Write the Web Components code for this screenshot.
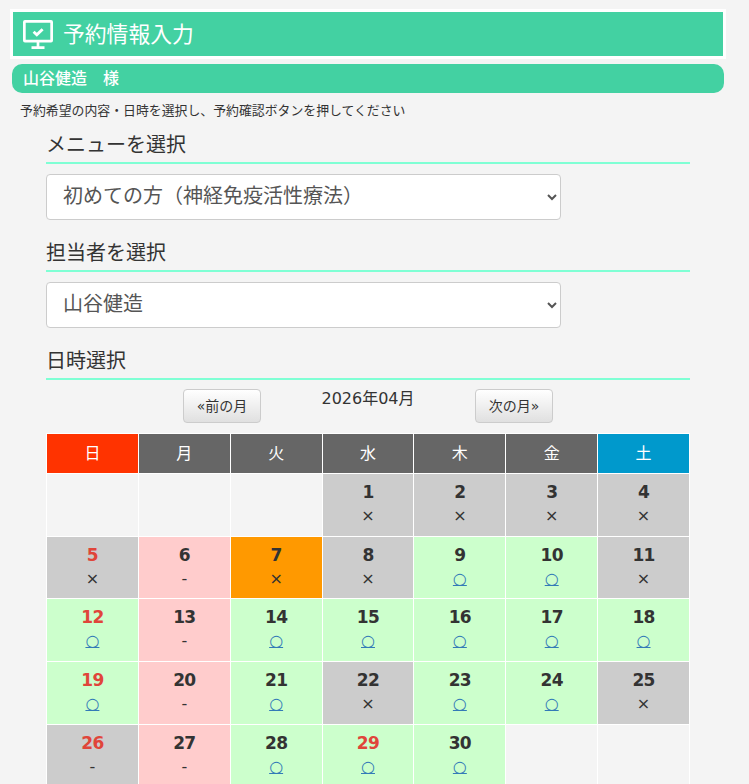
<!DOCTYPE html>
<html lang="ja">
<head>
<meta charset="utf-8">
<title>予約情報入力</title>
<style>
  html, body { margin: 0; padding: 0; background: #f4f4f4; }
  html { overflow: hidden; }
  body { font-family: "DejaVu Sans", "Noto Sans CJK JP", sans-serif; color: #333; }
</style>
</head>
<body>
<page-title>予約情報入力</page-title>
<user-bar>山谷健造　様</user-bar>
<p-note>予約希望の内容・日時を選択し、予約確認ボタンを押してください</p-note>
<form-area>
  <section-head>メニューを選択</section-head>
  <pick-list value="初めての方（神経免疫活性療法）"></pick-list>
  <section-head>担当者を選択</section-head>
  <pick-list value="山谷健造"></pick-list>
  <section-head>日時選択</section-head>
  <month-nav label="2026年04月"></month-nav>
  <reserve-calendar></reserve-calendar>
</form-area>

<script>
class PageTitle extends HTMLElement {
  constructor() {
    super();
    this.attachShadow({ mode: 'open' });
    this.shadowRoot.innerHTML = `
      <style>
        :host {
          display: flex;
          align-items: center;
          gap: 10px;
          box-sizing: border-box;
          height: 50px;
          margin: 9px 23px 0 10px;
          padding-left: 10px;
          background: #43d1a2;
          border: 3px solid #fff;
          color: #fff;
          font-size: 21.8px;
        }
        svg { width: 30px; height: 29px; display: block; }
        span { margin-bottom: 3px; }
      </style>
      <svg viewBox="0 0 30 29" fill="none" stroke="#fff" stroke-width="2.7">
        <rect x="1.35" y="1.35" width="27.3" height="19.8" rx="0.6"/>
        <path d="M10.6 11.8l3.2 3 5.8-5.6" stroke-width="2.9"/>
        <path d="M15 21.5v6M8.5 27.6h13"/>
      </svg>
      <span><slot></slot></span>
    `;
  }
}

class UserBar extends HTMLElement {
  constructor() {
    super();
    this.attachShadow({ mode: 'open' });
    this.shadowRoot.innerHTML = `
      <style>
        :host {
          display: flex;
          align-items: center;
          box-sizing: border-box;
          height: 29px;
          margin: 5px 25px 0 12px;
          padding: 0 0 4px 11px;
          background: #43d1a2;
          border-radius: 10px;
          color: #fff;
          font-size: 16px;
          font-weight: 500;
          font-family: "Noto Sans CJK JP", sans-serif;
        }
      </style>
      <slot></slot>
    `;
  }
}

class PNote extends HTMLElement {
  constructor() {
    super();
    this.attachShadow({ mode: 'open' });
    this.shadowRoot.innerHTML = `
      <style>
        :host {
          display: block;
          margin: 8px 0 12px 20px;
          font-size: 12.88px;
          line-height: 19px;
          color: #333;
        }
      </style>
      <slot></slot>
    `;
  }
}

class FormArea extends HTMLElement {
  constructor() {
    super();
    this.attachShadow({ mode: 'open' });
    this.shadowRoot.innerHTML = `
      <style>
        :host {
          display: block;
          width: 644px;
          margin-left: 46px;
        }
      </style>
      <slot></slot>
    `;
  }
}

class SectionHead extends HTMLElement {
  constructor() {
    super();
    this.attachShadow({ mode: 'open' });
    this.shadowRoot.innerHTML = `
      <style>
        :host {
          display: block;
          box-sizing: border-box;
          height: 32px;
          line-height: 27px;
          font-size: 20px;
          color: #333;
          border-bottom: 2px solid #7fffd4;
        }
      </style>
      <slot></slot>
    `;
  }
}

class PickList extends HTMLElement {
  constructor() {
    super();
    this.attachShadow({ mode: 'open' });
    const value = this.getAttribute('value');
    this.shadowRoot.innerHTML = `
      <style>
        :host {
          display: block;
          margin: 10px 0 20px;
        }
        select {
          display: block;
          box-sizing: border-box;
          width: 515px;
          height: 46px;
          padding: 0 12px 2px;
          background: #fff;
          border: 1px solid #ccc;
          border-radius: 4px;
          color: #555;
          font: 20px "DejaVu Sans", "Noto Sans CJK JP", sans-serif;
        }
      </style>
      <select><option>${value}</option></select>
    `;
  }
}

class MonthNav extends HTMLElement {
  constructor() {
    super();
    this.attachShadow({ mode: 'open' });
    this.shadowRoot.innerHTML = `
      <style>
        :host {
          display: grid;
          grid-template-columns: 78px 214px 78px;
          justify-content: center;
          margin: 9px 0 10px;
          height: 34px;
        }
        button {
          box-sizing: border-box;
          height: 34px;
          padding: 0 0 3px;
          border: 1px solid #ccc;
          border-radius: 4px;
          background: linear-gradient(#fff, #e0e0e0);
          color: #333;
          font: 14px "DejaVu Sans", "Noto Sans CJK JP", sans-serif;
        }
        span {
          text-align: center;
          font-size: 16px;
          line-height: 20px;
        }
      </style>
      <button>«前の月</button>
      <span>${this.getAttribute('label')}</span>
      <button>次の月»</button>
    `;
  }
}

class ReserveCalendar extends HTMLElement {
  constructor() {
    super();
    this.attachShadow({ mode: 'open' });
    this.weeks = [
      [null, null, null, [1, 'x'], [2, 'x'], [3, 'x'], [4, 'x']],
      [[5, 'x', 'off', 1], [6, '-', 'rest'], [7, 'x', 'today'], [8, 'x'], [9, 'o'], [10, 'o'], [11, 'x']],
      [[12, 'o', '', 1], [13, '-', 'rest'], [14, 'o'], [15, 'o'], [16, 'o'], [17, 'o'], [18, 'o']],
      [[19, 'o', '', 1], [20, '-', 'rest'], [21, 'o'], [22, 'x'], [23, 'o'], [24, 'o'], [25, 'x']],
      [[26, '-', 'off', 1], [27, '-', 'rest'], [28, 'o'], [29, 'o', '', 1], [30, 'o'], null, null]
    ];
    this.render();
  }

  renderCell(cell) {
    if (!cell) return '<div class="day"></div>';
    const [num, mark, kind, red] = cell;
    let cls = 'day';
    if (kind === 'rest') cls += ' rest';
    else if (kind === 'today') cls += ' today';
    else if (mark === 'o') cls += ' open';
    else cls += ' off';
    const sign = mark === 'o' ? '<a href="#">○</a>' : mark === 'x' ? '×' : '-';
    return `<div class="${cls}"><b class="${red ? 'red' : ''}">${num}</b><span>${sign}</span></div>`;
  }

  render() {
    const names = ['日', '月', '火', '水', '木', '金', '土'];
    this.shadowRoot.innerHTML = `
      <style>
        :host {
          display: grid;
          grid-template-columns: repeat(7, 1fr);
          grid-template-rows: 39px;
          grid-auto-rows: 61.67px;
          gap: 1px;
          padding: 1px;
          background: #fff;
          color: #333;
        }
        .head {
          display: flex;
          align-items: center;
          justify-content: center;
          box-sizing: border-box;
          padding-bottom: 3px;
          background: #666;
          color: #fff;
          font-size: 16px;
        }
        .head.sun { background: #ff3300; }
        .head.sat { background: #0099cc; }
        .day {
          background: #f4f4f4;
          text-align: center;
          padding-top: 8px;
          box-sizing: border-box;
        }
        .day.off { background: #ccc; }
        .day.rest { background: #ffcccc; }
        .day.open { background: #ccffcc; }
        .day.today { background: #ff9900; }
        b {
          display: block;
          font-size: 17px;
          letter-spacing: -0.7px;
          line-height: 20px;
        }
        b.red { color: #e0453a; }
        span {
          display: block;
          font-size: 16px;
          line-height: 28px;
        }
        a { color: #337ab7; }
      </style>
      ${names.map((n, i) => `<div class="head ${i === 0 ? 'sun' : i === 6 ? 'sat' : ''}">${n}</div>`).join('')}
      ${this.weeks.flat().map((c) => this.renderCell(c)).join('')}
    `;
  }
}

customElements.define('page-title', PageTitle);
customElements.define('user-bar', UserBar);
customElements.define('p-note', PNote);
customElements.define('form-area', FormArea);
customElements.define('section-head', SectionHead);
customElements.define('pick-list', PickList);
customElements.define('month-nav', MonthNav);
customElements.define('reserve-calendar', ReserveCalendar);
</script>
</body>
</html>
